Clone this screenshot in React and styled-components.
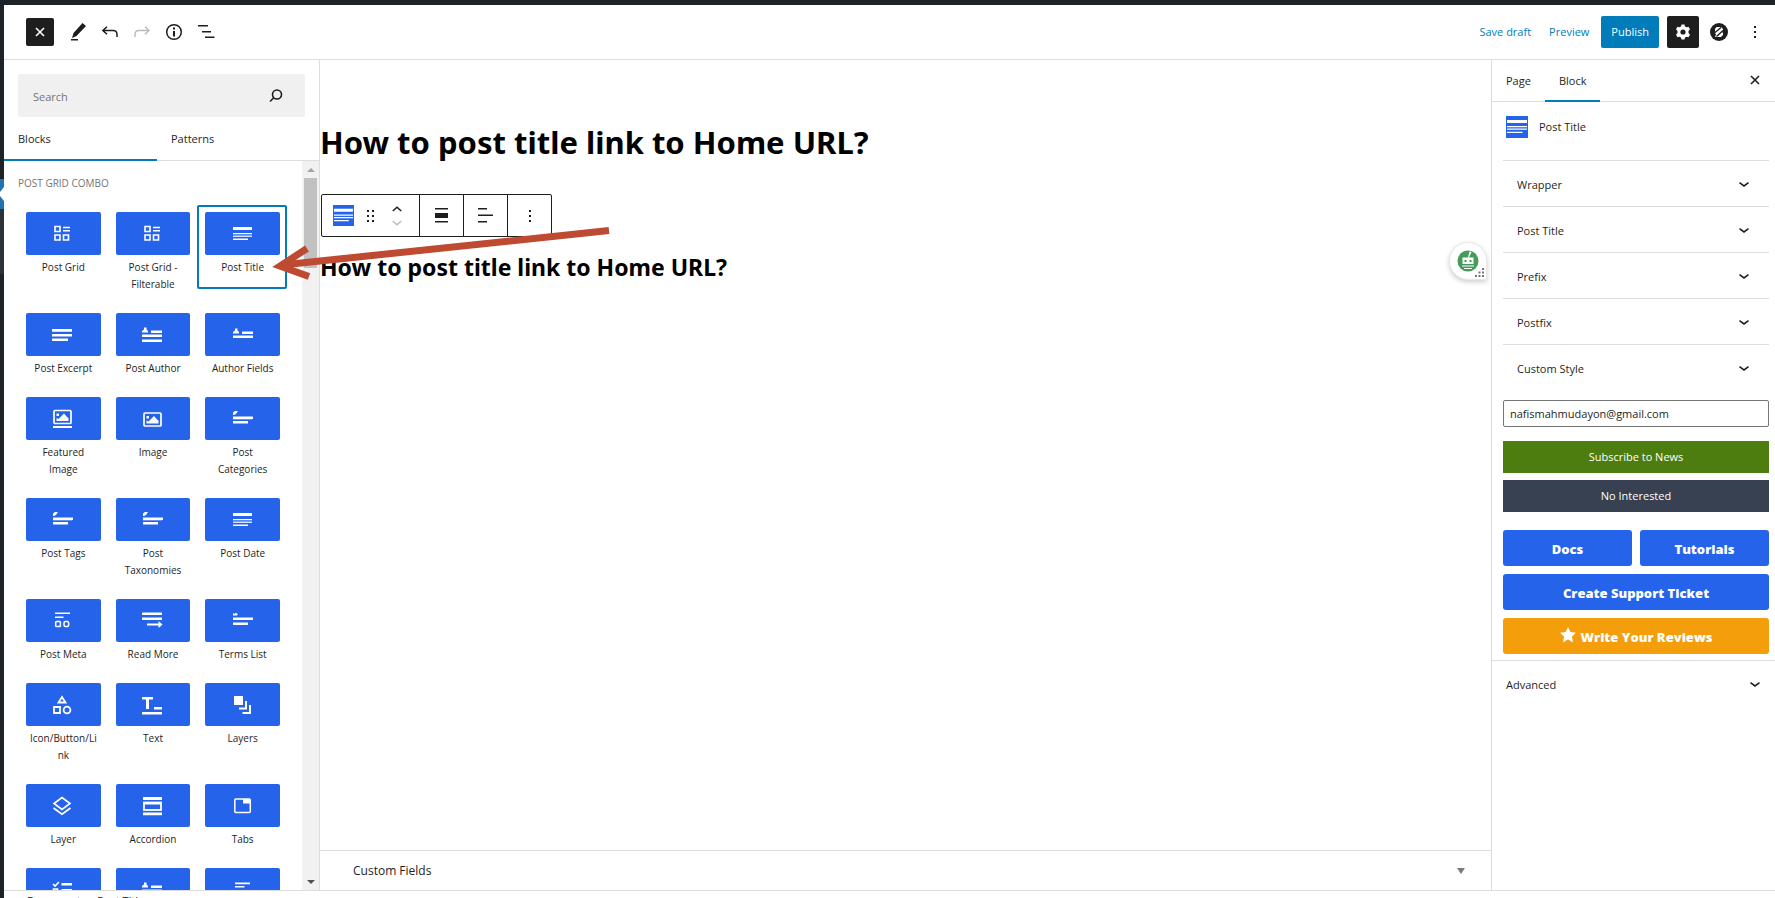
import React from "react";
import styled, { createGlobalStyle, css } from "styled-components";

const GlobalStyle = createGlobalStyle`
  *, *::before, *::after { box-sizing: border-box; }
  body {
    margin: 0;
    background: #1d2327;
    color: #1e1e1e;
    font-family: "Open Sans", "Noto Sans", sans-serif;
    font-size: 11px;
    line-height: 16px;
  }
  button, input { font: inherit; color: inherit; }
  button { border: 0; padding: 0; background: none; cursor: pointer; }
  h1, h2, h3, p, ul { margin: 0; padding: 0; }
  svg { display: block; flex: none; }
`;

const line = "1px solid #ddd";

const Page = styled.div`
  display: flex;
  height: 100vh;
  padding-top: 5px;
  overflow: hidden;
  background: #1d2327;
`;

const MenuRail = styled.aside`
  flex: none;
  width: 4px;
  padding-top: 174px;
`;

const CurrentMenu = styled.div`
  height: 30px;
  background: #2271b1;
`;

const OpenSubmenu = styled.div`
  height: 65px;
  background: #2c3338;
`;

const Editor = styled.div`
  flex: 1;
  min-width: 0;
  display: flex;
  flex-direction: column;
  height: calc(100vh + 11px);
  background: #fff;
`;

const Header = styled.header`
  flex: none;
  display: flex;
  align-items: center;
  justify-content: space-between;
  height: 55px;
  padding: 0 8px 0 22px;
  border-bottom: ${line};
`;

const HeaderGroup = styled.div`
  display: flex;
  align-items: center;
  gap: ${(p) => p.$gap}px;
`;

const IconButton = styled.button`
  display: grid;
  place-items: center;
  width: ${(p) => p.$size || 24}px;
  height: ${(p) => p.$size || 24}px;
  border-radius: 2px;
  color: ${(p) => (p.$dark ? "#fff" : p.disabled ? "#bbb" : "#1e1e1e")};
  background: ${(p) => (p.$dark ? "#1e1e1e" : "transparent")};
`;

const HeaderLink = styled.a`
  color: #007cba;
  text-decoration: none;
`;

const Publish = styled.button`
  height: 32px;
  padding: 0 10px;
  border-radius: 2px;
  color: #fff;
  background: #007cba;
`;

const Columns = styled.div`
  flex: 1;
  min-height: 0;
  display: flex;
`;

const Inserter = styled.section`
  flex: none;
  width: 316px;
  display: flex;
  flex-direction: column;
  border-right: ${line};
`;

const SearchBox = styled.label`
  flex: none;
  display: flex;
  align-items: center;
  height: 43px;
  margin: 14px;
  margin-bottom: 0;
  padding: 0 22px 0 15px;
  border-radius: 2px;
  background: #f0f0f0;
  input {
    flex: 1;
    min-width: 0;
    border: 0;
    padding: 2px 0 0;
    outline: 0;
    background: none;
  }
  input::placeholder { color: #757575; opacity: 1; }
`;

const InserterTabs = styled.div`
  flex: none;
  display: flex;
  height: 44px;
  border-bottom: ${line};
`;

const Tab = styled.button`
  width: ${(p) => p.$width || "auto"};
  padding: 2px 14px 0;
  text-align: left;
  font-weight: 500;
  margin-bottom: -1px;
  border-bottom: 2px solid ${(p) => (p.$active ? "#007cba" : "transparent")};
`;

const ListArea = styled.div`
  flex: 1;
  min-height: 0;
  display: flex;
`;

const BlockScroll = styled.div`
  flex: 1;
  min-width: 0;
  overflow: hidden;
  padding: 14px 15px 14px 14px;
`;

const Category = styled.h3`
  padding-bottom: 14px;
  font-size: 10px;
  font-weight: 500;
  line-height: 16px;
  color: #757575;
  text-transform: uppercase;
`;

const BlockGrid = styled.div`
  display: grid;
  grid-template-columns: repeat(3, 1fr);
  align-items: start;
`;

const BlockItem = styled.button`
  display: block;
  padding: 7px 7px 13px 8px;
  border-radius: 2px;
  ${(p) =>
    p.$selected &&
    css`
      box-shadow: inset 0 0 0 2px #007cba;
    `}
`;

const BlockTile = styled.span`
  display: grid;
  place-items: center;
  height: 43px;
  margin-bottom: 4px;
  border-radius: 2px;
  color: #fff;
  background: #2563eb;
`;

const BlockLabel = styled.span`
  display: block;
  padding: 0 2px;
  font-size: 10px;
  line-height: 17px;
  overflow-wrap: anywhere;
`;

const Scrollbar = styled.div`
  flex: none;
  width: 17px;
  display: flex;
  flex-direction: column;
  align-items: center;
  justify-content: space-between;
  padding: 7px 2px 6px;
  background: #f1f1f1;
`;

const ScrollTop = styled.div`
  display: flex;
  flex-direction: column;
  align-items: center;
  gap: 6px;
  width: 100%;
`;

const Thumb = styled.div`
  width: 100%;
  height: 90px;
  background: #c1c1c1;
`;

const Canvas = styled.main`
  flex: 1;
  min-width: 0;
  display: flex;
  flex-direction: column;
`;

const Content = styled.div`
  flex: 1;
  min-height: 0;
  position: relative;
  padding-top: 62px;
  color: #000;
`;

const Title = styled.h1`
  font-family: "Noto Sans", sans-serif;
  font-size: 31px;
  font-weight: 700;
  line-height: 40px;
  white-space: nowrap;
`;

const BlockTitle = styled.h2`
  padding-top: 12px;
  font-family: "Noto Sans", sans-serif;
  font-size: 23px;
  font-weight: 700;
  line-height: 36px;
  white-space: nowrap;
`;

const BlockToolbar = styled.div`
  display: flex;
  width: max-content;
  height: 43px;
  margin-top: 32px;
  margin-left: 1px;
  border: 1px solid #1e1e1e;
  border-radius: 2px;
  color: #1e1e1e;
`;

const ToolGroup = styled.div`
  display: flex;
  align-items: center;
  justify-content: center;
  gap: 12px;
  min-width: 44px;
  padding: 0 11px;
  & + & { border-left: 1px solid #1e1e1e; }
`;

const Movers = styled.div`
  display: flex;
  flex-direction: column;
  gap: 8px;
  padding: 0 6px;
`;

const Assistant = styled.button`
  position: absolute;
  top: 182px;
  right: 4px;
  width: 38px;
  height: 38px;
  display: grid;
  place-items: center;
  border: 1px solid #e8e8e8;
  border-radius: 19px 19px 0 19px;
  background: #fff;
  box-shadow: 0 2px 5px rgba(0, 0, 0, 0.2);
`;

const Grip = styled.svg`
  position: absolute;
  right: 2px;
  bottom: 2px;
`;

const PointerArrow = styled.svg`
  position: absolute;
  top: 165px;
  left: -52px;
  z-index: 2;
  pointer-events: none;
`;

const MetaBox = styled.button`
  flex: none;
  display: flex;
  align-items: center;
  justify-content: space-between;
  height: 40px;
  padding: 0 26px 0 33px;
  border-top: ${line};
  font-size: 12px;
`;

const Settings = styled.aside`
  flex: none;
  width: 284px;
  border-left: ${line};
`;

const SettingsTabs = styled.div`
  display: flex;
  height: 42px;
  border-bottom: ${line};
`;

const Spacer = styled.span`
  flex: 1;
`;

const BlockCard = styled.div`
  display: flex;
  align-items: center;
  gap: 11px;
  padding: 14px 14px 22px;
`;

const CardTitle = styled.h2`
  font-size: 11px;
  font-weight: 500;
`;

const Panels = styled.div`
  padding: 0 6px 6px 11px;
`;

const PanelToggle = styled.button`
  display: flex;
  align-items: center;
  justify-content: space-between;
  width: 100%;
  height: 46px;
  padding: 2px ${(p) => (p.$outer ? 15 : 20)}px 0 14px;
  border-top: ${line};
`;

const EmailInput = styled.input`
  display: block;
  width: 100%;
  height: 27px;
  margin: 10px 0 14px;
  padding: 0 6px;
  border: 1px solid #757575;
  border-radius: 2px;
  background: #fff;
`;

const NewsButton = styled.button`
  display: block;
  width: 100%;
  height: 32px;
  margin-bottom: 7px;
  color: #fff;
  background: ${(p) => (p.$green ? "#4d7c0f" : "#374151")};
`;

const Links = styled.div`
  display: grid;
  grid-template-columns: 1fr 1fr;
  gap: 8px;
  padding-top: 11px;
`;

const LinkButton = styled.a`
  display: flex;
  align-items: center;
  justify-content: center;
  gap: 5px;
  height: 36px;
  padding-top: 2px;
  grid-column: ${(p) => (p.$wide ? "1 / -1" : "auto")};
  border-radius: 3px;
  color: #fff;
  background: ${(p) => (p.$amber ? "#f59e0b" : "#2563eb")};
  font-size: 13px;
  font-weight: 800;
  text-decoration: none;
  svg { margin-bottom: 4px; }
`;

const Footer = styled.footer`
  flex: none;
  height: 24px;
  padding: 2px 23px;
  border-top: ${line};
  line-height: 16px;
`;

const Icon = ({ size = 20, children }) => (
  <svg width={size} height={size} viewBox="1 0 20 20" overflow="visible" fill="currentColor" aria-hidden="true">
    {children}
  </svg>
);

const Stroke = ({ w = 22, h = 22, sw = 1.5, box, d }) => (
  <svg width={w} height={h} viewBox={box || "0 0 24 24"} fill="none" stroke="currentColor" strokeWidth={sw} aria-hidden="true">
    <path d={d} />
  </svg>
);

const Chevron = () => <Stroke w={10} h={5} box="0 0 10 5" sw={1.6} d="M.5.7 5 3.900 9.500.7" />;

const CloseIcon = () => <Stroke w={10} h={10} box="0 0 10 10" sw={1.6} d="M1 1l8 8M9 1 1 9" />;

const titleBars = (
  <>
    <path d="M1 3h19v3H1zM1 9h19v1.300H1zM1 14.500h15v1.500H1z" />
    <path d="M1 11.500h19v1.500H1z" opacity=".8" />
  </>
);
const tagIcon = (
  <>
    <path d="M1 6V3.500L3 2h3L4 5 2 6zM1 7.500h20v2.500H1zM1 12h15v2.500H1z" />
    <path d="M1 10.500h19v.5H1z" opacity=".6" />
  </>
);
const personBars = (
  <path d="M3 1.500h2.500v2L7 5v1.500H1V5l2-1.500zM10 4.500h11V7H10zM1 8.500h20v2.500H1z" />
);

const glyphs = {
  grid: (
    <g fill="none" stroke="currentColor" strokeWidth="1.600">
      <path d="M3 2.500h5v5H3zM3 11h5v5H3zM11.500 11h5v5h-5zM11 3.500h7M11 6.800h7" />
    </g>
  ),
  title: titleBars,
  excerpt: <path d="M0 4h20v2.800H0zM0 9h20v2.600H0zM0 13.500h16v2.400H0z" />,
  author: <g transform="translate(-1 1)">{personBars}<path d="M1 13.500h20V16H1z" /></g>,
  fields: <g transform="translate(0 2)">{personBars}</g>,
  featured: (
    <>
      <rect x="2" y="1.500" width="17" height="13" rx="1" fill="none" stroke="currentColor" strokeWidth="1.700" />
      <path d="M4.500 12v-3l2 1 1.500-1.500 4-4 3 3.500 1.500 1v3zM4.500 4.500h2.500V7H4.500zM1 17h19v2H1z" />
    </>
  ),
  image: (
    <>
      <rect x="2" y="4" width="17" height="13" rx="1" fill="none" stroke="currentColor" strokeWidth="1.700" />
      <path d="M4.500 14.500v-3l2 1 1.500-1.500 4-4 3 3.500 1.500 1v3zM4.500 7h2.500v2.500H4.500z" />
    </>
  ),
  tags: tagIcon,
  meta: (
    <>
      <path d="M3 1.500h15V3H3zM3 5.500h8.500V7H3z" />
      <g fill="none" stroke="currentColor" strokeWidth="1.500">
        <rect x="3.700" y="10.500" width="4.700" height="5" rx=".8" />
        <rect x="12" y="10.500" width="4.700" height="5" rx="1.500" />
      </g>
    </>
  ),
  more: <path d="M0 1.500h20V4H0zM0 6.500h20V9H0zM5 12.500h11.500V10l4 3.500-4 3.500v-2.500H5z" />,
  terms: <path d="M1 4V2l1.500 1L4 1.500l1 1.500 1-.5-1 2H1zM1 6.500h20V9H1zM1 11.500h15V14H1z" />,
  shapes: (
    <g fill="none" stroke="currentColor" strokeWidth="1.800">
      <path d="M10 2 13.500 7.500H6.500zM2 12h6v6H2z" />
      <circle cx="15" cy="15" r="3.400" />
    </g>
  ),
  text: <path d="M0 2h11v2.500H7V14H4V4.500H0zM12 12h8v2.500h-8zM0 17h20v2.500H0z" />,
  layers: <path d="M2 1h9v9H2zM13 6h2v8.500H7V12.500h6zM17 10h2v9H10.500V17H17z" />,
  layer: (
    <g fill="none" stroke="currentColor" strokeWidth="1.700">
      <path d="M10 1.500 18 7.500 10 13.500 2 7.500zM1.500 12 10 18.300 18.500 12" />
    </g>
  ),
  accordion: (
    <>
      <path d="M1 1h19v3H1zM1 16.500h19v2.700H1z" />
      <rect x="2" y="6.500" width="17" height="7.500" fill="none" stroke="currentColor" strokeWidth="1.800" />
      <path d="M2 6h17v2.500H2z" />
    </>
  ),
  tabs: (
    <>
      <rect x="2.800" y="3" width="15.500" height="13.500" rx="1" fill="none" stroke="currentColor" strokeWidth="1.500" />
      <path d="M11 3h7v4.500h-7z" />
    </>
  ),
  checks: (
    <>
      <path d="M1 4l2 2 4-4M1.500 9h4v4h-4z" fill="none" stroke="currentColor" strokeWidth="1.600" />
      <path d="M9.500 3H20v2.500H9.500zM9.500 9H20v2.500H9.500z" />
    </>
  ),
  short: <path d="M3 2.500h15v1.800H3zM3 6h9.500v1.500H3zM3 10h14v1.500H3z" />,
};

const blocks = [
  ["Post Grid", "grid"],
  ["Post Grid - Filterable", "grid"],
  ["Post Title", "title"],
  ["Post Excerpt", "excerpt"],
  ["Post Author", "author"],
  ["Author Fields", "fields"],
  ["Featured Image", "featured"],
  ["Image", "image"],
  ["Post Categories", "tags"],
  ["Post Tags", "tags"],
  ["Post Taxonomies", "tags"],
  ["Post Date", "title"],
  ["Post Meta", "meta"],
  ["Read More", "more"],
  ["Terms List", "terms"],
  ["Icon/Button/Link", "shapes"],
  ["Text", "text"],
  ["Layers", "layers"],
  ["Layer", "layer"],
  ["Accordion", "accordion"],
  ["Tabs", "tabs"],
];

const moreBlocks = ["checks", "author", "short"];

const PostTitleIcon = ({ size }) => (
  <svg width={size} height={size} viewBox="0 0 22 22" aria-hidden="true">
    <path fill="#2563eb" d="M0 0h22v22H0z" />
    <path fill="#fff" d="M1 4h20v3H1zM1 10h20v1.300H1zM1 12.500h20v1.300H1zM1 15.800h15.500v1.300H1z" />
  </svg>
);

const Dots = ({ cols = 1, gap = 5 }) => (
  <svg width={cols === 1 ? 4 : 8} height="14" fill="currentColor" aria-hidden="true">
    {Array.from({ length: cols }, (_, c) =>
      [0, 1, 2].map((r) => <rect key={`${c}${r}`} x={1 + c * 5} y={1 + r * gap} width="2" height="2" />)
    )}
  </svg>
);

export default function App() {
  return (
    <>
      <GlobalStyle />
      <Page>
        <MenuRail>
          <CurrentMenu>
            <svg width="4" height="30" aria-hidden="true"><path fill="#fff" d="M4 8v14L0 17v-4z" /></svg>
          </CurrentMenu>
          <OpenSubmenu />
        </MenuRail>
        <Editor>
          <Header>
            <HeaderGroup $gap={12}>
              <IconButton $dark $size={28} aria-label="Close inserter"><CloseIcon /></IconButton>
              <HeaderGroup $gap={8}>
                <IconButton aria-label="Tools">
                  <svg width="16" height="18" fill="currentColor" aria-hidden="true">
                    <path d="M12.500 0 16 3 6.500 13 2 15l1.500-5zM1 16h7v1.500H1z" />
                  </svg>
                </IconButton>
                <IconButton aria-label="Undo">
                  <Stroke w={16} h={12} box="0 0 16 12" d="M5 .7.900 4.500 5 8.300M1 4.500h10q4 0 4 4V11" />
                </IconButton>
                <IconButton aria-label="Redo" disabled>
                  <Stroke w={16} h={12} box="0 0 16 12" d="m11 .7 4 3.800-4 3.800M15 4.500H5q-4 0-4 4V11" />
                </IconButton>
                <IconButton aria-label="Details">
                  <svg width="18" height="18" aria-hidden="true">
                    <circle cx="9" cy="9" r="7.300" fill="none" stroke="currentColor" strokeWidth="1.500" />
                    <path fill="currentColor" d="M8 4.500h2v2H8zM8 8h2v5.500H8z" />
                  </svg>
                </IconButton>
                <IconButton aria-label="List view">
                  <svg width="17" height="14" fill="currentColor" aria-hidden="true">
                    <path d="M0 0h10v1.500H0zM4 6h9v1.500H4zM7 11.500h9.500V13H7z" />
                  </svg>
                </IconButton>
              </HeaderGroup>
            </HeaderGroup>
            <HeaderGroup $gap={12}>
              <HeaderGroup $gap={18}>
                <HeaderLink href="#draft">Save draft</HeaderLink>
                <HeaderLink href="#preview">Preview</HeaderLink>
              </HeaderGroup>
              <HeaderGroup $gap={8}>
                <Publish>Publish</Publish>
                <IconButton $dark $size={32} aria-label="Settings">
                  <svg width="16" height="16" viewBox="0 0 16 16" aria-hidden="true">
                    <path fill="currentColor" d="M6.500.5h3l.5 2 1.500.8 2-.6 1.500 2.600L13.500 7v2l1.500 1.700-1.500 2.600-2-.6-1.500.8-.5 2h-3l-.5-2-1.500-.8-2 .6L1 10.700 2.500 9V7L1 5.300l1.500-2.600 2 .6L6 2.500z" />
                    <circle cx="8" cy="8" r="2.600" fill="#1e1e1e" />
                  </svg>
                </IconButton>
                <IconButton aria-label="Block library">
                  <svg width="18" height="18" aria-hidden="true">
                    <circle cx="9" cy="9" r="9" fill="currentColor" />
                    <path fill="#fff" d="M6.500 4H11l2 2v2l-1 1 1 1v2l-2 2H5l1-2.500-1-1.500V6z" />
                    <path stroke="#1e1e1e" strokeWidth="1.300" d="M5 9.500 11 4.500M6.500 13.500 13 7.500" />
                  </svg>
                </IconButton>
              </HeaderGroup>
              <IconButton aria-label="Options"><Dots gap={5} /></IconButton>
            </HeaderGroup>
          </Header>

          <Columns>
            <Inserter>
              <SearchBox>
                <input type="text" placeholder="Search" aria-label="Search" />
                <svg width="14" height="14" fill="none" stroke="currentColor" strokeWidth="1.600" aria-hidden="true">
                  <circle cx="8" cy="5.500" r="4.500" />
                  <path d="M4.800 8.800 1 12.500" />
                </svg>
              </SearchBox>
              <InserterTabs>
                <Tab $active $width="153px">Blocks</Tab>
                <Tab>Patterns</Tab>
              </InserterTabs>
              <ListArea>
                <BlockScroll>
                  <Category>Post Grid Combo</Category>
                  <BlockGrid>
                    {blocks.map(([name, icon]) => (
                      <BlockItem key={name} $selected={name === "Post Title"}>
                        <BlockTile><Icon>{glyphs[icon]}</Icon></BlockTile>
                        <BlockLabel>{name}</BlockLabel>
                      </BlockItem>
                    ))}
                    {moreBlocks.map((icon) => (
                      <BlockItem key={icon} aria-label="Block">
                        <BlockTile><Icon>{glyphs[icon]}</Icon></BlockTile>
                      </BlockItem>
                    ))}
                  </BlockGrid>
                </BlockScroll>
                <Scrollbar>
                  <ScrollTop>
                    <svg width="8" height="4" aria-hidden="true"><path fill="#a3a3a3" d="M4 0 8 4H0z" /></svg>
                    <Thumb />
                  </ScrollTop>
                  <svg width="8" height="4" aria-hidden="true"><path fill="#505050" d="M0 0h8L4 4z" /></svg>
                </Scrollbar>
              </ListArea>
            </Inserter>

            <Canvas>
              <Content>
                <Title>How to post title link to Home URL?</Title>
                <BlockToolbar>
                  <ToolGroup>
                    <PostTitleIcon size={21} />
                    <Dots cols={2} gap={5} />
                    <Movers>
                      <Stroke w={10} h={6} box="0 0 10 6" d="M.8 5 5 1.200 9.200 5" />
                      <svg width="10" height="6" fill="none" stroke="#bbb" strokeWidth="1.500" aria-hidden="true">
                        <path d="M.8 1 5 4.800 9.200 1" />
                      </svg>
                    </Movers>
                  </ToolGroup>
                  <ToolGroup>
                    <svg width="13" height="15" fill="currentColor" aria-hidden="true">
                      <path d="M0 0h13v1.500H0zM0 5h13v5H0zM0 13h13v1.500H0z" />
                    </svg>
                  </ToolGroup>
                  <ToolGroup>
                    <svg width="15" height="15" fill="currentColor" aria-hidden="true">
                      <path d="M0 0h9v1.500H0zM0 6.500h15V8H0zM0 13h9v1.500H0z" />
                    </svg>
                  </ToolGroup>
                  <ToolGroup><Dots /></ToolGroup>
                </BlockToolbar>
                <BlockTitle>How to post title link to Home URL?</BlockTitle>
                <Assistant aria-label="Writing assistant">
                  <svg width="22" height="22" aria-hidden="true">
                    <circle cx="11" cy="11" r="10.500" fill="#459b5a" />
                    <path fill="#fff" d="M12.500 1.500 14.500 2l-2.500 5.500h4.500V14h-11V7.500H11zM5 15.500h12v1H5zM7 18h8v1H7z" />
                    <path fill="#459b5a" d="M7.500 10h2v2h-2zM12.500 10h2v2h-2z" />
                  </svg>
                  <Grip width="9" height="9" fill="#777" aria-hidden="true">
                    <path d="M7 0h2v2H7zM7 3.500h2v2H7zM7 7h2v2H7zM3.500 3.500h2v2h-2zM3.500 7h2v2h-2zM0 7h2v2H0z" />
                  </Grip>
                </Assistant>
                <PointerArrow width="344" height="60" aria-hidden="true">
                  <path d="M341 5.500 14 40" stroke="#bf4a32" strokeWidth="7" fill="none" />
                  <path d="M39 23.500 12 41 41 51.500" stroke="#bf4a32" strokeWidth="7" fill="none" />
                </PointerArrow>
              </Content>
              <MetaBox>
                Custom Fields
                <svg width="8" height="6" aria-hidden="true"><path fill="#787c82" d="M0 0h8L4 6z" /></svg>
              </MetaBox>
            </Canvas>

            <Settings>
              <SettingsTabs>
                <Tab>Page</Tab>
                <Tab $active>Block</Tab>
                <Spacer />
                <IconButton $size={40} aria-label="Close settings"><CloseIcon /></IconButton>
              </SettingsTabs>
              <BlockCard>
                <PostTitleIcon size={22} />
                <CardTitle>Post Title</CardTitle>
              </BlockCard>
              <Panels>
                {["Wrapper", "Post Title", "Prefix", "Postfix", "Custom Style"].map((name) => (
                  <PanelToggle key={name}>{name}<Chevron /></PanelToggle>
                ))}
                <EmailInput type="email" aria-label="Email" defaultValue="nafismahmudayon@gmail.com" />
                <NewsButton $green>Subscribe to News</NewsButton>
                <NewsButton>No Interested</NewsButton>
                <Links>
                  <LinkButton href="#docs">Docs</LinkButton>
                  <LinkButton href="#tutorials">Tutorials</LinkButton>
                  <LinkButton href="#support" $wide>Create Support Ticket</LinkButton>
                  <LinkButton href="#reviews" $wide $amber>
                    <svg width="16" height="16" viewBox="0 0 16 16" aria-hidden="true">
                      <path fill="#fff" d="m8 0 2.400 5 5.600.7-4.100 3.800L13 15.500 8 12.500 3 15.500l1.100-6L0 5.700 5.600 5z" />
                    </svg>
                    Write Your Reviews
                  </LinkButton>
                </Links>
              </Panels>
              <PanelToggle $outer>Advanced<Chevron /></PanelToggle>
            </Settings>
          </Columns>
          <Footer>Document → Post Title</Footer>
        </Editor>
      </Page>
    </>
  );
}
